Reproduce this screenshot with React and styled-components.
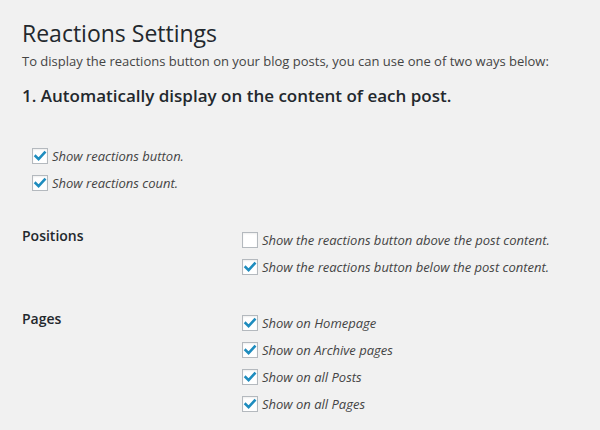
import React from 'react'
import styled, { createGlobalStyle } from 'styled-components'

const GlobalStyle = createGlobalStyle`
  html, body {
    margin: 0;
    padding: 0;
    background: #f1f1f1;
  }
  body {
    font-family: 'Open Sans', 'Noto Sans', sans-serif;
    color: #444;
  }
`

const positions = [
  { label: 'Show the reactions button above the post content.', checked: false },
  { label: 'Show the reactions button below the post content.', checked: true },
]

const pages = [
  { label: 'Show on Homepage', checked: true },
  { label: 'Show on Archive pages', checked: true },
  { label: 'Show on all Posts', checked: true },
  { label: 'Show on all Pages', checked: true },
]

function Checkbox({ checked, label }) {
  return (
    <Row>
      <Box>
        {checked && (
          <svg width='16' height='16' viewBox='0 0 16 16'>
            <path d='M3.6 8.2 L6.6 11.2 L12.6 4.6' fill='none' stroke='#1e8cbe' strokeWidth='2.6' strokeLinecap='square' />
          </svg>
        )}
      </Box>
      <Label>{label}</Label>
    </Row>
  )
}

function App() {
  return (
    <Wrap>
      <GlobalStyle />
      <Title>Reactions Settings</Title>
      <Intro>To display the reactions button on your blog posts, you can use one of two ways below:</Intro>
      <Heading>1. Automatically display on the content of each post.</Heading>
      <List $indent>
        <Checkbox checked label='Show reactions button.' />
        <Checkbox checked label='Show reactions count.' />
      </List>
      <Settings>
        <Field>Positions</Field>
        <List>
          {positions.map((p) => (
            <Checkbox key={p.label} {...p} />
          ))}
        </List>
        <Field>Pages</Field>
        <List>
          {pages.map((p) => (
            <Checkbox key={p.label} {...p} />
          ))}
        </List>
      </Settings>
    </Wrap>
  )
}

export default App

const Wrap = styled.div`
  padding: 17px 22px 0;
  height: 430px;
  box-sizing: border-box;
  overflow: hidden;
`
const Title = styled.h1`
  margin: 0;
  font-size: 23px;
  font-weight: 400;
  line-height: normal;
  color: #23282d;
`
const Intro = styled.p`
  margin: 3px 0 0;
  font-size: 13px;
  line-height: normal;
  color: #444;
`
const Heading = styled.h2`
  margin: 14px 0 0;
  font-size: 17px;
  font-weight: 600;
  line-height: normal;
  color: #23282d;
`
const List = styled.div`
  display: flex;
  flex-direction: column;
  padding-left: ${(props) => (props.$indent ? '10px' : '0')};
  margin-top: ${(props) => (props.$indent ? '35px' : '0')};
`
const Row = styled.label`
  display: flex;
  align-items: center;
  gap: 4px;
  height: 27px;
`
const Box = styled.span`
  display: inline-block;
  width: 16px;
  height: 16px;
  box-sizing: border-box;
  border: 1px solid #b4b9be;
  background: #fff;
  box-shadow: inset 0 1px 2px rgba(0, 0, 0, 0.07);
  position: relative;
  svg {
    position: absolute;
    left: -1px;
    top: -1px;
  }
`
const Label = styled.span`
  font-size: 13px;
  font-style: italic;
  color: #444;
  line-height: normal;
`
const Settings = styled.div`
  display: grid;
  grid-template-columns: 220px 1fr;
  row-gap: 29px;
  margin-top: 30px;
`
const Field = styled.div`
  font-size: 14px;
  font-weight: 600;
  color: #23282d;
  line-height: normal;
`
